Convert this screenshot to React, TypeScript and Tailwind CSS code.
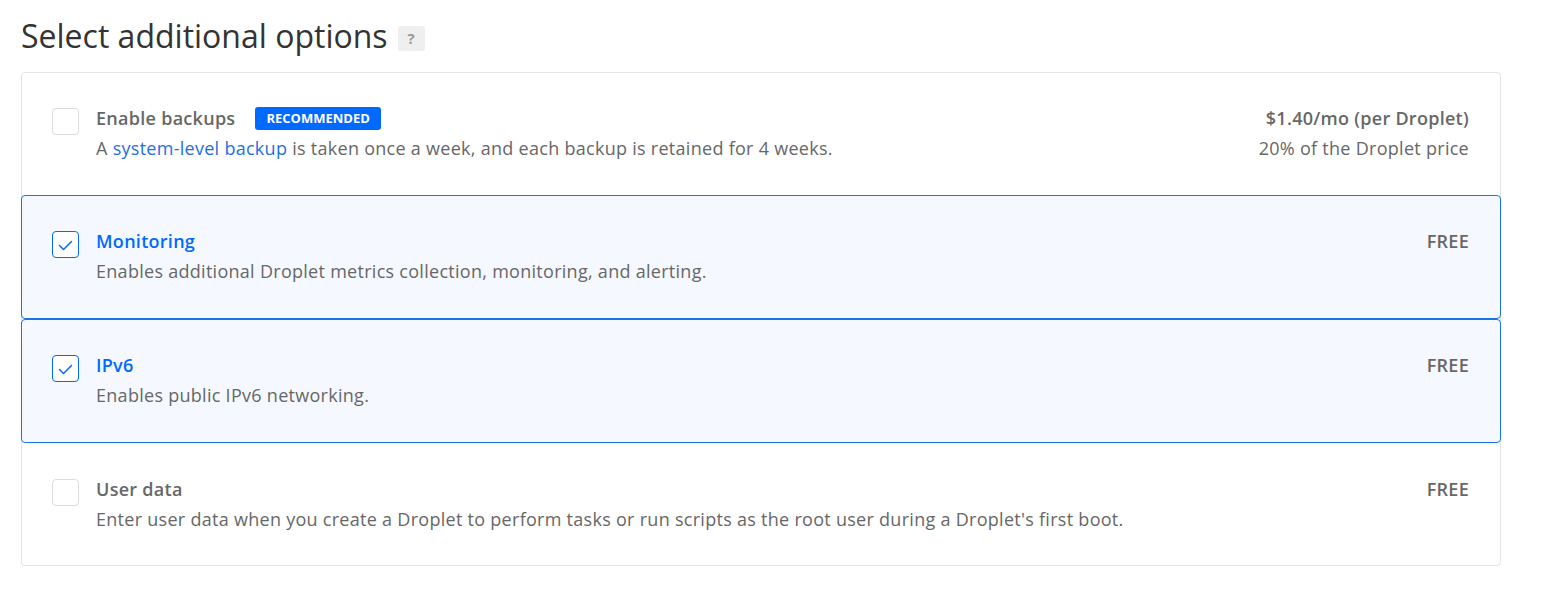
const FONT = { fontFamily: "'Open Sans', Lato, sans-serif" };

type Option = {
  title: string;
  desc: React.ReactNode;
  price: string;
  sub?: string;
  checked: boolean;
  badge?: string;
};

const OPTIONS: Option[] = [
  {
    title: "Enable backups",
    badge: "RECOMMENDED",
    desc: (
      <>
        A <span className="text-[#1f6fe0]">system-level backup</span> is taken once a week, and each backup is retained for 4 weeks.
      </>
    ),
    price: "$1.40/mo (per Droplet)",
    sub: "20% of the Droplet price",
    checked: false,
  },
  {
    title: "Monitoring",
    desc: "Enables additional Droplet metrics collection, monitoring, and alerting.",
    price: "FREE",
    checked: true,
  },
  {
    title: "IPv6",
    desc: "Enables public IPv6 networking.",
    price: "FREE",
    checked: true,
  },
  {
    title: "User data",
    desc: "Enter user data when you create a Droplet to perform tasks or run scripts as the root user during a Droplet's first boot.",
    price: "FREE",
    checked: false,
  },
];

function Checkbox({ checked }: { checked: boolean }) {
  return (
    <div
      className={`mt-[1px] w-[27px] h-[27px] shrink-0 rounded-[4px] border bg-white flex items-center justify-center ${
        checked ? "border-[#0069ff]" : "border-[#dcdcdc]"
      }`}
    >
      {checked && (
        <svg width="15" height="11" viewBox="0 0 15 11" fill="none" className="mt-[2px]">
          <path d="M1.5 5.5 L5.5 9.5 L13.5 1.5" stroke="#0069ff" strokeWidth="1.5" strokeLinecap="round" strokeLinejoin="round" />
        </svg>
      )}
    </div>
  );
}

export default function App() {
  return (
    <div className="bg-white min-h-[596px] pt-[14px] px-[21px]" style={FONT}>
      <div className="flex items-center gap-[10px] h-[44px]">
        <h2 className="text-[32px] leading-none text-[#333] font-normal">Select additional options</h2>
        <span className="w-[27px] h-[25px] mt-[4px] rounded-[3px] bg-[#efefef] text-[#9a9a9a] text-[15px] font-bold flex items-center justify-center">
          ?
        </span>
      </div>
      <div className="mt-[14px] w-[1480px] border border-[#e4e4e4] rounded-[4px] bg-white tracking-[0.28px]">
        {OPTIONS.map((o, i) => (
          <div
            key={o.title}
            className={`-mx-px border rounded-[4px] flex items-start pl-[30px] pr-[31px] pt-[34px] ${
              o.checked ? "h-[124px] border-[#1a73e8] bg-[#f5f9ff]" : "h-[123px] border-transparent"
            } ${i === 0 ? "-mt-px" : ""} ${i === OPTIONS.length - 1 ? "-mb-px" : ""}`}
          >
            <Checkbox checked={o.checked} />
            <div className="ml-[17px] flex-1">
              <div className="flex items-center h-[23px]">
                <span className={`text-[18px] font-semibold ${o.checked ? "text-[#0069ff]" : "text-[#676767]"}`}>{o.title}</span>
                {o.badge && (
                  <span className="ml-[20px] h-[23px] px-[11px] rounded-[3px] bg-[#0069ff] text-white text-[13px] font-bold tracking-normal flex items-center">
                    {o.badge}
                  </span>
                )}
              </div>
              <div className="mt-[6px] text-[18px] leading-[24px] text-[#676767]">{o.desc}</div>
            </div>
            <div className="text-right">
              <div className="h-[23px] text-[18px] font-semibold text-[#676767] flex items-center justify-end">{o.price}</div>
              {o.sub && <div className="mt-[6px] text-[18px] leading-[24px] text-[#676767]">{o.sub}</div>}
            </div>
          </div>
        ))}
      </div>
    </div>
  );
}
